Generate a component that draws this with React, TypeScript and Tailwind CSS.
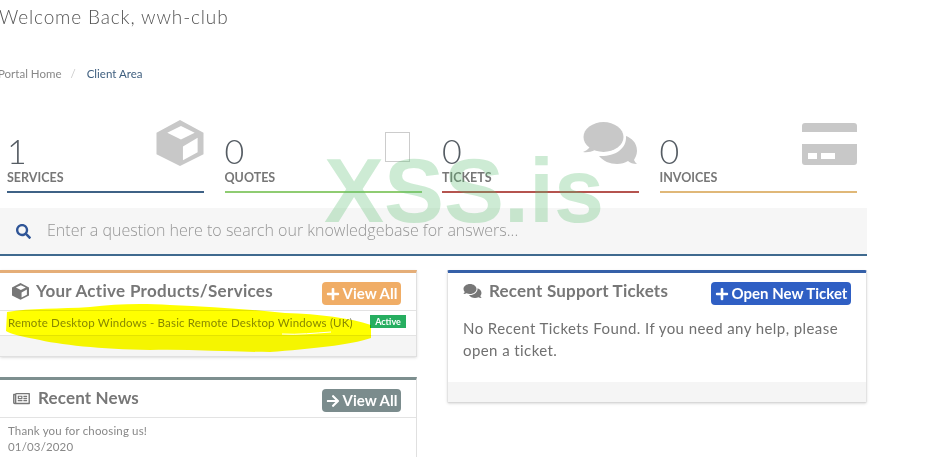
import { FaPlus, FaArrowRight, FaSearch, FaComments, FaRegNewspaper } from "react-icons/fa";

function CubeIcon({ className }: { className: string }) {
  return (
    <svg viewBox="0 0 48 48" className={className} fill="currentColor">
      <path
        fillRule="evenodd"
        d="M24 0 L48 13 V35 L24 47 L0 35 V13 Z M25 6 L11 13 L25 20 L39 13 Z M27 27 V41 L42 33 V18 Z"
      />
    </svg>
  );
}

function ChatIcon() {
  return (
    <svg viewBox="0 0 56 44" className="w-[56px] h-[44px] text-[#c8c8c8]" fill="currentColor">
      <path d="M43 14 C48 16 54 20 54 29 C54 33 52 36 51 38 C52 40 53 41 54 42 C50 42 47 41 45 39 C42 41 38 42 34 42 C27 42 20 39 16 34 C30 35 44 28 43 14 Z" />
      <ellipse cx="20.5" cy="15" rx="20" ry="15" />
      <path d="M7 25 L12 28 C8 30 4 30.5 0 30 C3 29 5 27 7 25 Z" />
    </svg>
  );
}

function CardIcon() {
  return (
    <svg viewBox="0 0 55 42" className="w-[55px] h-[42px] text-[#c8c8c8]" fill="currentColor">
      <path d="M3 0 H52 A3 3 0 0 1 55 3 V9 H0 V3 A3 3 0 0 1 3 0 Z" />
      <path
        fillRule="evenodd"
        d="M0 21 H55 V39 A3 3 0 0 1 52 42 H3 A3 3 0 0 1 0 39 Z M6 30 V36 H15 V30 Z M19 30 V36 H33 V30 Z"
      />
    </svg>
  );
}

function Stat({ value, label, color, icon }: { value: string; label: string; color: string; icon: React.ReactNode }) {
  return (
    <div className={`relative w-[197px] h-[73px] border-b-2 ${color}`}>
      {icon}
      <div className="pt-[13px] text-[34px] leading-[36px] font-light text-[#555c63]">{value}</div>
      <div className="text-[12.5px] leading-[17px] font-bold text-[#777]">{label}</div>
    </div>
  );
}

export default function App() {
  return (
    <div className="relative w-[925px] h-[457px] overflow-hidden bg-white font-['Lato','Open_Sans',sans-serif] text-[#666]">
      <h1 className="-ml-[1px] pt-[5px] text-[19px] leading-[24px] font-light tracking-[0.85px] text-[#555]">
        Welcome Back, wwh-club
      </h1>

      <nav className="mt-[37px] flex items-center text-[11.5px] leading-[16px] -ml-[2px]">
        <span className="text-[#888]">Portal Home</span>
        <span className="ml-[9px] text-[#ccc]">/</span>
        <span className="ml-[11px] text-[#3f5f7f]">Client Area</span>
      </nav>

      <div className="mt-[38px] pl-[7px] flex gap-[20.5px]">
        <Stat
          value="1"
          label="SERVICES"
          color="border-[#3f6286]"
          icon={<div className="absolute right-0 top-0"><CubeIcon className="w-[48px] h-[47px] text-[#c8c8c8]" /></div>}
        />
        <Stat
          value="0"
          label="QUOTES"
          color="border-[#8fcc72]"
          icon={<div className="absolute right-[12px] top-[12px] w-[25px] h-[30px] border border-[#ccc]" />}
        />
        <Stat
          value="0"
          label="TICKETS"
          color="border-[#b5544f]"
          icon={<div className="absolute right-0 top-[2px]"><ChatIcon /></div>}
        />
        <Stat
          value="0"
          label="INVOICES"
          color="border-[#e0b878]"
          icon={<div className="absolute right-0 top-[3px]"><CardIcon /></div>}
        />
      </div>

      <div className="mt-[15px] w-[867px] h-[48px] bg-[#f6f6f6] border-b-2 border-[#3f6a8f] flex items-center pl-[16px] font-['Open_Sans',sans-serif]">
        <FaSearch className="w-[15px] h-[15px] text-[#2f5597]" />
        <span className="ml-[16px] -mt-[2px] text-[16px] font-light text-[#969696]">
          Enter a question here to search our knowledgebase for answers...
        </span>
      </div>

      <div className="mt-[14px] flex gap-[30px] items-start w-[867px]">
        <div className="w-[417px] flex flex-col gap-[20px]">
          <section className="relative bg-white border-t-[3px] border-t-[#e5ae78] border-r border-b border-[#e0e0e0] shadow-sm">
            <div className="h-[38px] flex items-start justify-between pl-[12px] pr-[15px] border-b border-[#e3e3e3]">
              <div className="flex items-center gap-[7px] pt-[6px]">
                <CubeIcon className="w-[17px] h-[17px] text-[#777]" />
                <span className="text-[17px] leading-[24px] font-bold text-[#777] tracking-[0.3px]">Your Active Products/Services</span>
              </div>
              <button className="mt-[9px] h-[23px] w-[79px] rounded-[4px] bg-[#f0ad66] text-white text-[15px] font-bold flex items-center justify-center gap-[3px]">
                <FaPlus className="w-[14px] h-[14px]" />
                View All
              </button>
            </div>
            <div className="h-[25px] flex items-center justify-between border-b border-[#e3e3e3] pl-[8px] pr-[10px]">
              <span className="text-[11.5px] tracking-[0.17px] text-[#888]">
                Remote Desktop Windows - Basic Remote Desktop Windows (UK)
              </span>
              <span className="-mt-[3px] w-[36px] h-[13px] bg-[#27ae60] text-white text-[9px] leading-[13px] font-bold text-center">
                Active
              </span>
            </div>
            <div className="h-[20px] bg-[#f5f5f5]" />
          </section>

          <section className="bg-white border-t-[3px] border-t-[#7d8f8f] border-r border-[#e0e0e0] h-[90px]">
            <div className="h-[38px] flex items-start justify-between pl-[12px] pr-[15px] border-b border-[#e3e3e3]">
              <div className="flex items-center gap-[7px] pt-[6px]">
                <FaRegNewspaper className="w-[19px] h-[15px] text-[#777]" />
                <span className="text-[17px] leading-[24px] font-bold text-[#777] tracking-[0.15px]">Recent News</span>
              </div>
              <button className="mt-[9px] h-[23px] w-[79px] rounded-[4px] bg-[#7b8c8d] text-white text-[15px] font-bold flex items-center justify-center gap-[3px]">
                <FaArrowRight className="w-[14px] h-[14px]" />
                View All
              </button>
            </div>
            <div className="pl-[8px] pt-[5px] text-[11.5px] leading-[16px] text-[#888] tracking-[0.15px]">
              <div>Thank you for choosing us!</div>
              <div>01/03/2020</div>
            </div>
          </section>
        </div>

        <section className="w-[420px] bg-white border-t-[3px] border-t-[#3560a8] border-x border-b border-x-[#e3e3e3] border-b-[#d8d8d8] rounded-[2px] shadow-sm">
          <div className="h-[38px] flex items-start justify-between px-[15px]">
            <div className="flex items-center gap-[7px] pt-[6px]">
              <FaComments className="w-[19px] h-[16px] text-[#777]" />
              <span className="text-[17px] leading-[24px] font-bold text-[#777] tracking-[0.2px]">Recent Support Tickets</span>
            </div>
            <button className="mt-[9px] h-[23px] w-[140px] rounded-[4px] bg-[#2f5fc4] text-white text-[15px] font-bold flex items-center justify-center gap-[3px]">
              <FaPlus className="w-[14px] h-[14px]" />
              Open New Ticket
            </button>
          </div>
          <p className="px-[15px] pt-[6px] h-[71px] text-[15px] leading-[22px] text-[#707070] tracking-[0.42px]">
            No Recent Tickets Found. If you need any help, please open a ticket.
          </p>
          <div className="h-[20px] bg-[#f5f5f5]" />
        </section>
      </div>

      <svg viewBox="0 0 925 457" className="absolute inset-0 w-[925px] h-[457px] mix-blend-multiply pointer-events-none">
        <path
          d="M7 312 C30 308 60 309 90 307 C115 304 140 303 170 305 C210 307 250 309 285 313 C320 314 350 318 371 325 L371 338 C350 345 310 349 270 352 C230 352 190 349 150 350 C100 349 60 345 35 339 C20 336 10 334 6 331 Z"
          fill="#ffff00"
        />
      </svg>
      <svg viewBox="0 0 925 457" className="absolute inset-0 w-[925px] h-[457px] pointer-events-none">
        <path d="M282 334 C298 335 315 333 331 332" stroke="#fff" strokeWidth="1" fill="none" />
      </svg>

      <div className="absolute left-[324px] top-[141px] text-[90px] leading-[100px] font-bold font-['Liberation_Sans',sans-serif] text-[#5cbf72] opacity-30 pointer-events-none whitespace-nowrap">
        XSS.is
      </div>
    </div>
  );
}
